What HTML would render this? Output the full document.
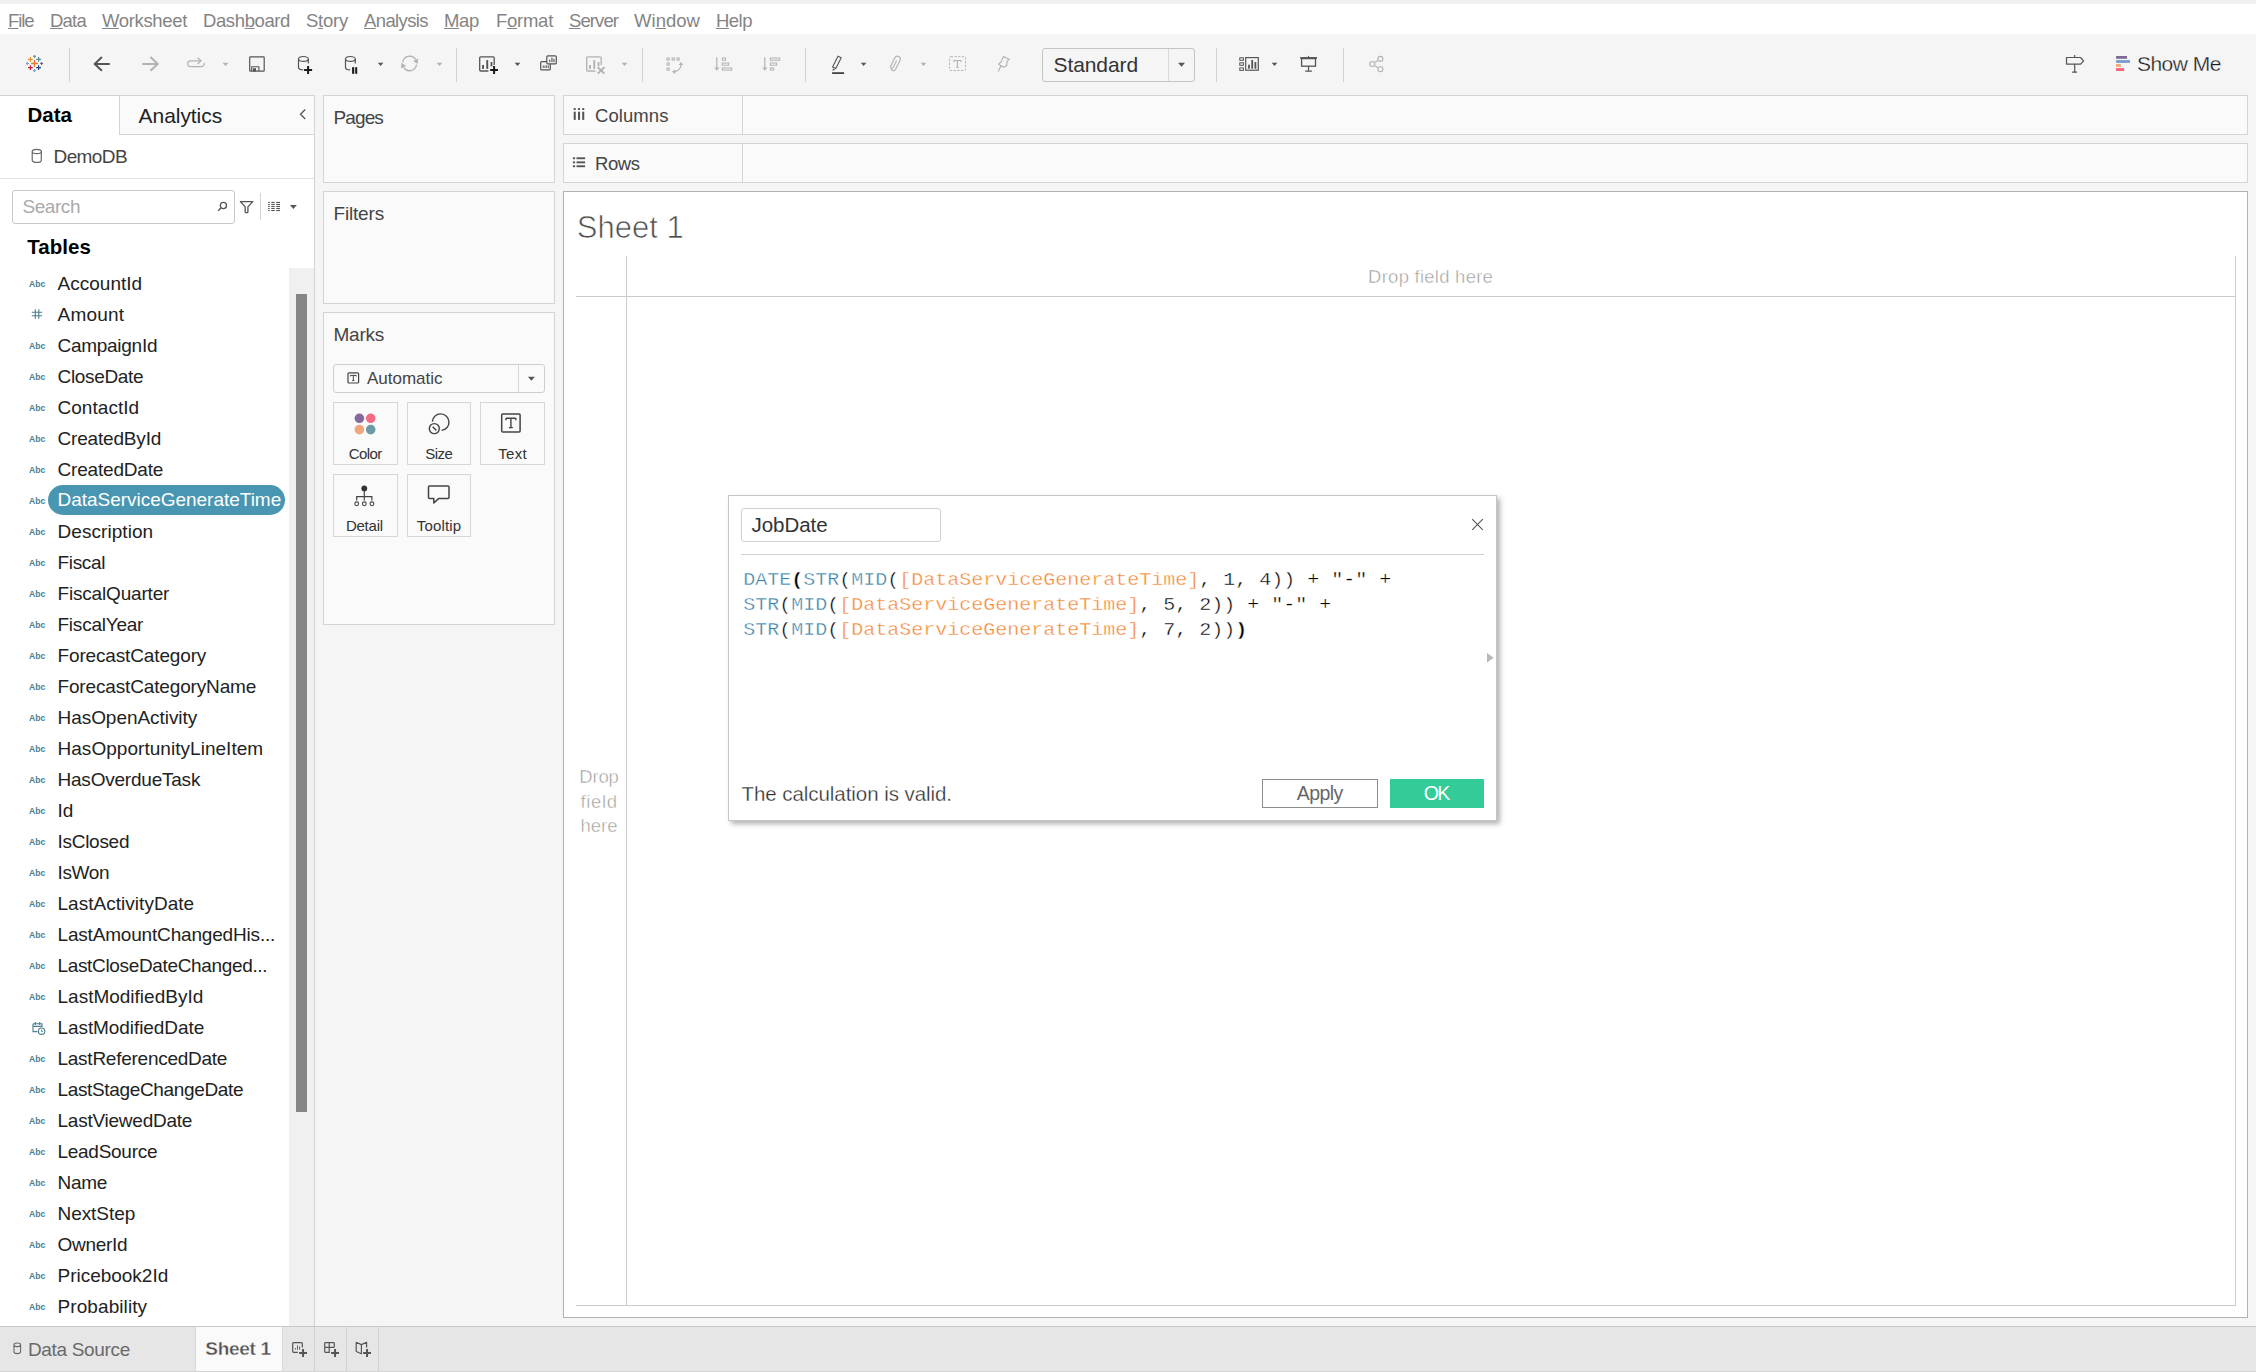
<!DOCTYPE html><html><head><meta charset="utf-8"><title>Tableau - Sheet 1</title><style>
html,body{margin:0;padding:0;}body{width:2256px;height:1372px;position:relative;overflow:hidden;background:#f5f5f5;font-family:"Liberation Sans", sans-serif;}
div,svg,span.t{position:absolute;}span.t{white-space:pre;line-height:1;}u{text-decoration-thickness:1px;text-underline-offset:1px;}
</style></head><body>
<div style="left:0px;top:0px;width:2256px;height:4px;background:#f0f0f0;"></div>
<div style="left:0px;top:4px;width:2256px;height:30px;background:#ffffff;"></div>
<div style="left:0px;top:34px;width:2256px;height:61px;background:#f5f5f5;"></div>
<div style="left:69px;top:48px;width:1px;height:34px;background:#d0d0d0;"></div>
<div style="left:456px;top:48px;width:1px;height:34px;background:#d0d0d0;"></div>
<div style="left:642px;top:48px;width:1px;height:34px;background:#d0d0d0;"></div>
<div style="left:805px;top:48px;width:1px;height:34px;background:#d0d0d0;"></div>
<div style="left:1216px;top:48px;width:1px;height:34px;background:#d0d0d0;"></div>
<div style="left:1343px;top:48px;width:1px;height:34px;background:#d0d0d0;"></div>
<div style="left:0px;top:95px;width:315px;height:1231px;background:#ffffff;border:1px solid #d2d2d2;box-sizing:border-box;border-left:none;border-bottom:none;"></div>
<div style="left:119px;top:95px;width:196px;height:40px;background:#fafafa;border:1px solid #d4d4d4;box-sizing:border-box;"></div>
<svg style="left:299px;top:108px;" width="8" height="13" viewBox="0 0 8 13"><path d="M6.2 1.5 L1.5 6.3 L6.2 11" fill="none" stroke="#555" stroke-width="1.3"/></svg>
<svg style="left:31px;top:148px;" width="12" height="16" viewBox="0 0 12 16"><path d="M1.2 3.5 C1.2 0.6 10.3 0.6 10.3 3.5 V12.2 C10.3 15.2 1.2 15.2 1.2 12.2 Z M1.2 3.5 C1.2 6.4 10.3 6.4 10.3 3.5" fill="none" stroke="#666" stroke-width="1.2"/></svg>
<div style="left:0px;top:178px;width:314px;height:1px;background:#e2e2e2;"></div>
<div style="left:12px;top:190px;width:223px;height:34px;background:#fff;border:1px solid #c8c8c8;box-sizing:border-box;border-radius:3px;"></div>
<div style="left:260px;top:193px;width:1px;height:27px;background:#d4d4d4;"></div>
<div style="left:289px;top:268px;width:25px;height:1058px;background:#f0f0f0;"></div>
<div style="left:296px;top:294px;width:11px;height:818px;background:#868686;"></div>
<svg style="left:31px;top:308px;" width="12" height="12" viewBox="0 0 12 12"><path d="M4.3 1.2 V10.8 M7.8 1.2 V10.8 M0.8 4.3 H11.2 M0.8 7.8 H11.2" stroke="#4a7e91" stroke-width="1.1" fill="none"/></svg>
<div style="left:48px;top:485px;width:237px;height:30px;background:#4996b2;border-radius:15px;"></div>
<svg style="left:30.7px;top:1020.9px;" width="16" height="15" viewBox="0 0 16 15"><path d="M2 2.8 H11 V6 M2 2.8 V10.6 H6.5 M2 5.4 H11 M4.3 1 V4 M8.7 1 V4" fill="none" stroke="#4a7e91" stroke-width="1.1"/><circle cx="10.6" cy="10.2" r="3.2" fill="none" stroke="#4a7e91" stroke-width="1.1"/><path d="M10.6 8.6 V10.4 H12" fill="none" stroke="#4a7e91" stroke-width="0.9"/></svg>
<div style="left:323px;top:95px;width:232px;height:88px;background:#fafafa;border:1px solid #d4d4d4;box-sizing:border-box;"></div>
<div style="left:323px;top:191px;width:232px;height:113px;background:#fafafa;border:1px solid #d4d4d4;box-sizing:border-box;"></div>
<div style="left:323px;top:312px;width:232px;height:313px;background:#fafafa;border:1px solid #d4d4d4;box-sizing:border-box;"></div>
<div style="left:563px;top:95px;width:1685px;height:40px;background:#fafafa;border:1px solid #d4d4d4;box-sizing:border-box;"></div>
<div style="left:742px;top:95px;width:1px;height:40px;background:#d4d4d4;"></div>
<div style="left:563px;top:143px;width:1685px;height:40px;background:#fafafa;border:1px solid #d4d4d4;box-sizing:border-box;"></div>
<div style="left:742px;top:143px;width:1px;height:40px;background:#d4d4d4;"></div>
<div style="left:563px;top:191px;width:1685px;height:1127px;background:#fff;border:1px solid #b2b2b2;box-sizing:border-box;"></div>
<div style="left:576px;top:296px;width:1660px;height:1px;background:#cbcbcb;"></div>
<div style="left:626px;top:256px;width:1px;height:1050px;background:#cbcbcb;"></div>
<div style="left:2235px;top:256px;width:1px;height:1050px;background:#cbcbcb;"></div>
<div style="left:576px;top:1305px;width:1660px;height:1px;background:#cbcbcb;"></div>
<div style="left:0px;top:1326px;width:2256px;height:46px;background:#e6e6e6;"></div>
<div style="left:0px;top:1326px;width:2256px;height:1px;background:#c8c8c8;"></div>
<div style="left:195px;top:1327px;width:88px;height:45px;background:#fafafa;border-left:1px solid #d8d8d8;border-right:1px solid #d8d8d8;box-sizing:border-box;"></div>
<div style="left:314px;top:1327px;width:1px;height:45px;background:#d2d2d2;"></div>
<div style="left:346px;top:1327px;width:1px;height:45px;background:#d2d2d2;"></div>
<div style="left:378px;top:1327px;width:1px;height:45px;background:#d2d2d2;"></div>
<div style="left:0px;top:1371px;width:2256px;height:1px;background:#d4d4d4;"></div>
<svg style="left:13px;top:1342px;" width="9" height="13" viewBox="0 0 9 13"><path d="M1 2.8 C1 0.4 7.6 0.4 7.6 2.8 V9.8 C7.6 12.2 1 12.2 1 9.8 Z M1 2.8 C1 5.2 7.6 5.2 7.6 2.8" fill="none" stroke="#666" stroke-width="1.1"/></svg>
<div style="left:333px;top:364px;width:212px;height:29px;background:#fafafa;border:1px solid #cfcfcf;box-sizing:border-box;border-radius:3px;"></div>
<div style="left:518px;top:365px;width:1px;height:27px;background:#d9d9d9;"></div>
<svg style="left:347px;top:372px;" width="13" height="12" viewBox="0 0 13 12"><rect x="1" y="0.8" width="10.6" height="10.2" rx="1" fill="none" stroke="#444" stroke-width="1.2"/><path d="M3.4 3.4 H9.2 M6.3 3.4 V8.6 M5.2 8.6 H7.4 M3.4 3.4 V4.4 M9.2 3.4 V4.4" stroke="#444" stroke-width="1" fill="none"/></svg>
<div style="left:333px;top:402px;width:65px;height:63px;background:#fafafa;border:1px solid #d6d6d6;box-sizing:border-box;"></div>
<div style="left:407px;top:402px;width:64px;height:63px;background:#fafafa;border:1px solid #d6d6d6;box-sizing:border-box;"></div>
<div style="left:480px;top:402px;width:65px;height:63px;background:#fafafa;border:1px solid #d6d6d6;box-sizing:border-box;"></div>
<div style="left:333px;top:474px;width:65px;height:63px;background:#fafafa;border:1px solid #d6d6d6;box-sizing:border-box;"></div>
<div style="left:407px;top:474px;width:64px;height:63px;background:#fafafa;border:1px solid #d6d6d6;box-sizing:border-box;"></div>
<svg style="left:352px;top:411px;" width="26" height="26" viewBox="0 0 26 26"><circle cx="7.4" cy="7.3" r="4.8" fill="#85699a"/><circle cx="18.7" cy="7.3" r="4.8" fill="#f26d81"/><circle cx="7.4" cy="18.6" r="4.8" fill="#f0a57c"/><circle cx="18.7" cy="18.6" r="4.8" fill="#6c9aa5"/></svg>
<svg style="left:426px;top:411px;" width="26" height="26" viewBox="0 0 26 26"><path d="M6.4 10.6 A8.3 8.3 0 1 1 15.6 19.4" fill="none" stroke="#444" stroke-width="1.4"/><circle cx="8.3" cy="17.6" r="5" fill="none" stroke="#444" stroke-width="1.4"/><path d="M6.6 15.7 L10.4 19.6" stroke="#444" stroke-width="1.4"/></svg>
<svg style="left:500px;top:412px;" width="22" height="22" viewBox="0 0 22 22"><rect x="1.7" y="1.9" width="18.4" height="18" rx="1" fill="none" stroke="#444" stroke-width="1.5"/><path d="M6 6.2 H15.8 M10.9 6.2 V15.4 M8.9 15.6 H12.9 M6 6 V8.3 M15.8 6 V8.3" stroke="#444" stroke-width="1.4" fill="none"/></svg>
<svg style="left:353px;top:484px;" width="24" height="24" viewBox="0 0 24 24"><circle cx="11.3" cy="4.4" r="2.9" fill="#333"/><path d="M11.3 7 V16.5 M3.7 16.5 V12.6 H18.9 V16.5" fill="none" stroke="#444" stroke-width="1.2"/><circle cx="3.7" cy="19.8" r="1.9" fill="none" stroke="#444" stroke-width="1.1"/><circle cx="11.3" cy="19.8" r="1.9" fill="none" stroke="#444" stroke-width="1.1"/><circle cx="18.9" cy="19.8" r="1.9" fill="none" stroke="#444" stroke-width="1.1"/></svg>
<svg style="left:427px;top:484px;" width="24" height="22" viewBox="0 0 24 22"><path d="M2.5 2 H21 Q22 2 22 3 V13.6 Q22 14.6 21 14.6 H11.6 L6.8 19 V14.6 H2.5 Q1.5 14.6 1.5 13.6 V3 Q1.5 2 2.5 2 Z" fill="none" stroke="#444" stroke-width="1.5" stroke-linejoin="round"/></svg>
<svg style="left:573px;top:108px;" width="13" height="13" viewBox="0 0 13 13"><rect x="0.7" y="3.7" width="2.05" height="8.2" fill="#555"/><rect x="0.7" y="0.1" width="2.05" height="1.9" fill="#555"/><rect x="5" y="3.7" width="2.05" height="8.2" fill="#555"/><rect x="5" y="0.1" width="2.05" height="1.9" fill="#555"/><rect x="9.2" y="3.7" width="2.05" height="8.2" fill="#555"/><rect x="9.2" y="0.1" width="2.05" height="1.9" fill="#555"/></svg>
<svg style="left:572px;top:156px;" width="14" height="12" viewBox="0 0 14 12"><rect x="0.9" y="1.3" width="2.2" height="1.9" fill="#555"/><rect x="4.5" y="1.3" width="8.6" height="1.9" fill="#555"/><rect x="0.9" y="5.4" width="2.2" height="1.9" fill="#555"/><rect x="4.5" y="5.4" width="8.6" height="1.9" fill="#555"/><rect x="0.9" y="9.3" width="2.2" height="1.9" fill="#555"/><rect x="4.5" y="9.3" width="8.6" height="1.9" fill="#555"/></svg>
<svg style="left:25px;top:54px;" width="20" height="20" viewBox="0 0 20 20"><path d="M6.1 9.5 H12.9 M9.5 6.1 V12.9" stroke="#e8762d" stroke-width="1.3" fill="none"/><path d="M3.0000000000000004 5.4 H7.800000000000001 M5.4 3.0000000000000004 V7.800000000000001" stroke="#eb912c" stroke-width="1.2" fill="none"/><path d="M11.2 5.4 H16.0 M13.6 3.0000000000000004 V7.800000000000001" stroke="#59879b" stroke-width="1.2" fill="none"/><path d="M3.0000000000000004 13.6 H7.800000000000001 M5.4 11.2 V16.0" stroke="#c72037" stroke-width="1.2" fill="none"/><path d="M11.2 13.6 H16.0 M13.6 11.2 V16.0" stroke="#1f457e" stroke-width="1.2" fill="none"/><path d="M8.0 2.4 H11.0 M9.5 0.8999999999999999 V3.9" stroke="#6e9aa8" stroke-width="1.1" fill="none"/><path d="M8.0 16.6 H11.0 M9.5 15.100000000000001 V18.1" stroke="#8d9cc6" stroke-width="1.1" fill="none"/><path d="M0.8999999999999999 9.5 H3.9 M2.4 8.0 V11.0" stroke="#7ea3b0" stroke-width="1.1" fill="none"/><path d="M15.100000000000001 9.5 H18.1 M16.6 8.0 V11.0" stroke="#5c6692" stroke-width="1.1" fill="none"/></svg>
<svg style="left:92px;top:55px;" width="20" height="18" viewBox="0 0 20 18"><path d="M17.8 8.9 H3.2 M9.9 2.1 L2.7 8.9 L9.9 15.8" fill="none" stroke="#555555" stroke-width="2"/></svg>
<svg style="left:140px;top:55px;" width="20" height="18" viewBox="0 0 20 18"><path d="M2.3 8.9 H17 M10.5 2.1 L17.7 8.9 L10.5 15.8" fill="none" stroke="#b2b2b2" stroke-width="2"/></svg>
<svg style="left:186px;top:55px;" width="20" height="14" viewBox="0 0 20 14"><path d="M14 5.8 H4.6 A2.9 2.9 0 0 0 4.6 11.6 H15.4 A2.9 2.9 0 0 0 18.2 7.9" fill="none" stroke="#b2b2b2" stroke-width="1.2"/><path d="M11.6 2.7 L15 5.8 L11.6 8.9" fill="none" stroke="#b2b2b2" stroke-width="1.3"/></svg>
<svg style="left:220px;top:60px;" width="10" height="8" viewBox="0 0 10 8"><path d="M2.70 2.75 h5.6 l-2.8 3.3 Z" fill="#b2b2b2"/></svg>
<svg style="left:248px;top:55px;" width="18" height="18" viewBox="0 0 18 18"><rect x="1.7" y="1.8" width="14.5" height="14.4" rx="0.8" fill="none" stroke="#555555" stroke-width="1.2"/><path d="M3.7 16 V11.8 H10.9 V16" fill="none" stroke="#555555" stroke-width="1.1"/><rect x="5" y="13.2" width="3" height="3.2" fill="#555555"/></svg>
<svg style="left:296px;top:54px;" width="20" height="22" viewBox="0 0 20 22"><ellipse cx="7.4" cy="4.9" rx="4.9" ry="2.4" fill="none" stroke="#555555" stroke-width="1.2"/><path d="M2.5 4.9 V13.2 C2.5 15 5 15.9 7.2 15.9 M12.3 4.9 V9.6" fill="none" stroke="#555555" stroke-width="1.2"/><path d="M8.1 16 H16.1 M12.1 12 V20" stroke="#1a1a1a" stroke-width="2" fill="none"/></svg>
<svg style="left:343px;top:54px;" width="20" height="22" viewBox="0 0 20 22"><ellipse cx="7.4" cy="4.9" rx="4.9" ry="2.4" fill="none" stroke="#555555" stroke-width="1.2"/><path d="M2.5 4.9 V13.2 C2.5 15 5 15.9 7.2 15.9 M12.3 4.9 V9.6" fill="none" stroke="#555555" stroke-width="1.2"/><rect x="9.1" y="13.2" width="2.1" height="6.6" fill="#1a1a1a"/><rect x="12.2" y="13.2" width="2" height="6.6" fill="#1a1a1a"/></svg>
<svg style="left:375px;top:60px;" width="10" height="8" viewBox="0 0 10 8"><path d="M2.80 2.75 h5.6 l-2.8 3.3 Z" fill="#555555"/></svg>
<svg style="left:400px;top:54px;" width="20" height="20" viewBox="0 0 20 20"><path d="M2.7 8.3 A7 7 0 0 1 15.6 5.4 M16.5 10.5 A7 7 0 0 1 3.6 13.4" fill="none" stroke="#b2b2b2" stroke-width="1.3"/><path d="M13.2 6.9 L18.3 4.6 L17.6 10 Z M6 11.9 L0.9 14.2 L1.6 8.8 Z" fill="#b2b2b2"/></svg>
<svg style="left:434px;top:60px;" width="10" height="8" viewBox="0 0 10 8"><path d="M2.70 2.75 h5.6 l-2.8 3.3 Z" fill="#b2b2b2"/></svg>
<svg style="left:478px;top:55px;" width="22" height="20" viewBox="0 0 22 20"><path d="M16.2 10 V2.8 Q16.2 1.8 15.2 1.8 H2.7 Q1.7 1.8 1.7 2.8 V15 Q1.7 16 2.7 16 H10.4" fill="none" stroke="#555555" stroke-width="1.3"/><rect x="4.1" y="10" width="1.9" height="3.9" fill="#555555"/><rect x="8.3" y="5.1" width="1.9" height="8.8" fill="#555555"/><rect x="12.6" y="7" width="1.8" height="4.4" fill="#555555"/><path d="M12.2 15 H20 M16.1 11.1 V18.9" stroke="#1a1a1a" stroke-width="2" fill="none"/></svg>
<svg style="left:512px;top:60px;" width="10" height="8" viewBox="0 0 10 8"><path d="M2.70 2.75 h5.6 l-2.8 3.3 Z" fill="#555555"/></svg>
<svg style="left:539px;top:54px;" width="20" height="19" viewBox="0 0 20 19"><path d="M7.8 7.7 H2.7 Q1.7 7.7 1.7 8.7 V14.9 Q1.7 15.9 2.7 15.9 H10.3 Q11.3 15.9 11.3 14.9 V9.9" fill="none" stroke="#555555" stroke-width="1.2"/><path d="M4.3 11.4 V14 M6 11.4 V14 M7.7 11.4 V14 M9.4 11.4 V14" stroke="#555555" stroke-width="0.9"/><rect x="7.8" y="1.8" width="9.5" height="8.1" rx="1" fill="none" stroke="#555555" stroke-width="1.2"/><rect x="10.2" y="5.6" width="1.1" height="2.6" fill="#555555"/><rect x="12.4" y="3.6" width="1.1" height="4.6" fill="#555555"/><rect x="14.4" y="4.8" width="1.1" height="3.4" fill="#555555"/></svg>
<svg style="left:585px;top:55px;" width="22" height="20" viewBox="0 0 22 20"><path d="M16.2 10 V2.8 Q16.2 1.8 15.2 1.8 H2.7 Q1.7 1.8 1.7 2.8 V15 Q1.7 16 2.7 16 H10.4" fill="none" stroke="#b2b2b2" stroke-width="1.3"/><rect x="4.1" y="10" width="1.9" height="3.9" fill="#b2b2b2"/><rect x="8.3" y="5.1" width="1.9" height="8.8" fill="#b2b2b2"/><rect x="12.6" y="7" width="1.8" height="4.4" fill="#b2b2b2"/><path d="M12.8 12.2 L19.4 18.6 M19.4 12.2 L12.8 18.6" stroke="#b2b2b2" stroke-width="1.9" fill="none"/></svg>
<svg style="left:619px;top:60px;" width="10" height="8" viewBox="0 0 10 8"><path d="M2.70 2.75 h5.6 l-2.8 3.3 Z" fill="#b2b2b2"/></svg>
<svg style="left:665px;top:56px;" width="18" height="18" viewBox="0 0 18 18"><rect x="2" y="2" width="2.2" height="2.1" fill="none" stroke="#b2b2b2" stroke-width="1"/><rect x="7.1" y="2" width="2.2" height="2.1" fill="none" stroke="#b2b2b2" stroke-width="1"/><rect x="12" y="2" width="2.2" height="2.1" fill="none" stroke="#b2b2b2" stroke-width="1"/><rect x="2" y="7" width="2.2" height="2.1" fill="none" stroke="#b2b2b2" stroke-width="1"/><rect x="2" y="12" width="2.2" height="2.1" fill="none" stroke="#b2b2b2" stroke-width="1"/><path d="M16 7.4 C16.4 12.4 13.2 15.4 8.6 15.6" fill="none" stroke="#b2b2b2" stroke-width="1.2"/><path d="M13.7 9 L16 5.9 L18.3 9 Z M10.3 13.4 L7.1 15.7 L10.3 17.9 Z" fill="#b2b2b2"/></svg>
<svg style="left:712.5px;top:56px;" width="20" height="17" viewBox="0 0 20 17"><path d="M3.8 1.2 V13" stroke="#b2b2b2" stroke-width="1.2"/><path d="M1.3 11.4 L3.8 14.8 L6.3 11.4 Z" fill="#b2b2b2"/><rect x="9.3" y="2" width="3.2" height="2.2" fill="none" stroke="#b2b2b2" stroke-width="1"/><rect x="9.3" y="7" width="6.4" height="2.2" fill="none" stroke="#b2b2b2" stroke-width="1"/><rect x="9.3" y="12" width="9.4" height="2.1" fill="none" stroke="#b2b2b2" stroke-width="1"/></svg>
<svg style="left:760.7px;top:56px;" width="20" height="17" viewBox="0 0 20 17"><path d="M3.8 1.2 V13" stroke="#b2b2b2" stroke-width="1.2"/><path d="M1.3 11.4 L3.8 14.8 L6.3 11.4 Z" fill="#b2b2b2"/><rect x="9.3" y="2" width="9.4" height="2.2" fill="none" stroke="#b2b2b2" stroke-width="1"/><rect x="9.3" y="7" width="6.4" height="2.2" fill="none" stroke="#b2b2b2" stroke-width="1"/><rect x="9.3" y="12" width="3.4" height="2.1" fill="none" stroke="#b2b2b2" stroke-width="1"/></svg>
<svg style="left:830px;top:54px;" width="18" height="22" viewBox="0 0 18 22"><path d="M8 2.2 L11.2 3.8 L5.8 14.6 L2.6 13 Z" fill="none" stroke="#555555" stroke-width="1.1"/><path d="M2.9 14.4 L2.6 16.9 L5.2 15.5 Z" fill="#555555"/><rect x="2.1" y="18.2" width="12" height="1.8" fill="#444"/></svg>
<svg style="left:858px;top:60px;" width="10" height="8" viewBox="0 0 10 8"><path d="M2.80 2.75 h5.6 l-2.8 3.3 Z" fill="#555555"/></svg>
<svg style="left:886px;top:54px;" width="18" height="20" viewBox="0 0 18 20"><path d="M-0.1 -3.4 V4.4 A1.4 1.4 0 0 1 -2.9 4.4 V-5 A2.9 2.9 0 0 1 2.9 -5 V5.2 A2.1 2.1 0 0 1 -1.3 5.2" fill="none" stroke="#b2b2b2" stroke-width="1.1" transform="translate(9.2 9.6) rotate(27)"/></svg>
<svg style="left:918px;top:60px;" width="10" height="8" viewBox="0 0 10 8"><path d="M2.70 2.75 h5.6 l-2.8 3.3 Z" fill="#b2b2b2"/></svg>
<svg style="left:948px;top:55px;" width="18" height="18" viewBox="0 0 18 18"><rect x="1.6" y="1.7" width="16" height="13.8" rx="1.2" fill="none" stroke="#b2b2b2" stroke-width="1" stroke-dasharray="2.2 1.5"/><path d="M5.9 5.5 H12.9 M9.4 5.5 V12.2 M8 12.3 H10.8 M5.9 5.3 V6.9 M12.9 5.3 V6.9" stroke="#b2b2b2" stroke-width="1.1" fill="none"/></svg>
<svg style="left:994px;top:55px;" width="18" height="18" viewBox="0 0 18 18"><path d="M9.4 1.4 L15.4 4.4 L13.2 6 L12.6 10.6 L9.6 12.2 L4.6 9.2 L7 7 L8.8 3 Z M7 10.7 L4.2 16.4" fill="none" stroke="#b2b2b2" stroke-width="1.1" stroke-linejoin="round"/></svg>
<div style="left:1042px;top:48px;width:153px;height:34px;background:#f5f5f5;border:1px solid #c4c4c4;box-sizing:border-box;border-radius:3px;"></div>
<div style="left:1168px;top:49px;width:1px;height:32px;background:#d9d9d9;"></div>
<svg style="left:1176px;top:60px;" width="10" height="8" viewBox="0 0 10 8"><path d="M2.00 2.80 h7.0 l-3.5 4.0 Z" fill="#555"/></svg>
<svg style="left:1238px;top:55px;" width="22" height="18" viewBox="0 0 22 18"><rect x="1.8" y="2.8" width="3.6" height="2.5" fill="none" stroke="#555555" stroke-width="1"/><rect x="1.8" y="7.8" width="3.6" height="2.5" fill="none" stroke="#555555" stroke-width="1"/><rect x="1.8" y="12.9" width="3.6" height="2.5" fill="none" stroke="#555555" stroke-width="1"/><rect x="7.7" y="2.6" width="12.6" height="12.6" fill="none" stroke="#555555" stroke-width="1.2"/><rect x="10.1" y="9.7" width="1.8" height="4" fill="#555555"/><rect x="13.3" y="5" width="1.8" height="8.7" fill="#555555"/><rect x="16.5" y="7.1" width="1.8" height="6.6" fill="#555555"/></svg>
<svg style="left:1269px;top:60px;" width="10" height="8" viewBox="0 0 10 8"><path d="M2.70 2.75 h5.6 l-2.8 3.3 Z" fill="#555555"/></svg>
<svg style="left:1299px;top:55px;" width="20" height="18" viewBox="0 0 20 18"><path d="M1.2 3 H17.9" stroke="#555555" stroke-width="1.9"/><path d="M9.5 0.9 V2.2" stroke="#555555" stroke-width="1.1"/><rect x="2.6" y="3.6" width="13.9" height="7.6" fill="none" stroke="#555555" stroke-width="1.3"/><path d="M9.5 11.2 V15.8 M6.2 16.2 H12.9" stroke="#555555" stroke-width="1.2"/></svg>
<svg style="left:1367.7px;top:55px;" width="17" height="18" viewBox="0 0 17 18"><circle cx="12.4" cy="3.9" r="2.5" fill="none" stroke="#b2b2b2" stroke-width="1.1"/><circle cx="4.2" cy="9" r="2.5" fill="none" stroke="#b2b2b2" stroke-width="1.1"/><circle cx="12.4" cy="14.2" r="2.5" fill="none" stroke="#b2b2b2" stroke-width="1.1"/><path d="M6.3 7.7 L10.2 5.2 M6.3 10.3 L10.2 12.9" stroke="#b2b2b2" stroke-width="1.1"/></svg>
<svg style="left:2064px;top:54px;" width="22" height="20" viewBox="0 0 22 20"><path d="M2.5 3.5 H16.6 L19.6 6.8 L16.6 10.1 H2.5 Z" fill="none" stroke="#555555" stroke-width="1.2" stroke-linejoin="round"/><path d="M10.7 1 V3.5 M10.7 10.1 V18 M8.1 18.2 H13" stroke="#555555" stroke-width="1.2"/></svg>
<svg style="left:2115px;top:55px;" width="16" height="17" viewBox="0 0 16 17"><rect x="1.1" y="1" width="10.9" height="2.8" fill="#806b95"/><rect x="1.1" y="5.1" width="13.9" height="2.8" fill="#7a9ccb"/><rect x="1.1" y="9.1" width="4.8" height="2.7" fill="#f0a470"/><rect x="1.1" y="13.1" width="8" height="2.9" fill="#f4627a"/></svg>
<svg style="left:291px;top:1341px;" width="18" height="18" viewBox="0 0 18 18"><path d="M11.3 6.5 V2.7 Q11.3 1.7 10.3 1.7 H2.7 Q1.7 1.7 1.7 2.7 V10.3 Q1.7 11.3 2.7 11.3 H6.8" fill="none" stroke="#555" stroke-width="1.2"/><rect x="4.1" y="7.1" width="0.9" height="1.5" fill="#555"/><rect x="6.1" y="4.4" width="0.9" height="4.3" fill="#555"/><rect x="8.2" y="5.5" width="0.9" height="3.2" fill="#555"/><path d="M8.1 12 H16 M12.05 8.1 V15.9" stroke="#555" stroke-width="2" fill="none"/></svg>
<svg style="left:323px;top:1341px;" width="18" height="18" viewBox="0 0 18 18"><path d="M11.3 6.3 V2.5 Q11.3 1.7 10.5 1.7 H2.5 Q1.7 1.7 1.7 2.5 V10.5 Q1.7 11.3 2.5 11.3 H6.8 M6.2 1.7 V11.3 M1.7 6.3 H11.3" fill="none" stroke="#555" stroke-width="1.2"/><path d="M8.1 12 H16 M12.05 8.1 V15.9" stroke="#555" stroke-width="2" fill="none"/></svg>
<svg style="left:355px;top:1341px;" width="18" height="18" viewBox="0 0 18 18"><path d="M1.2 1.2 L6.4 3.6 L11.6 1.2 V6.4 M1.2 1.2 V10.5 L6.4 12.7 V3.6" fill="none" stroke="#555" stroke-width="1.2" stroke-linejoin="round"/><path d="M8.1 12 H16 M12.05 8.1 V15.9" stroke="#555" stroke-width="2" fill="none"/></svg>
<svg style="left:526px;top:374px;" width="10" height="8" viewBox="0 0 10 8"><path d="M1.90 2.80 h7.0 l-3.5 4.0 Z" fill="#555"/></svg>
<svg style="left:216px;top:200px;" width="13" height="13" viewBox="0 0 13 13"><circle cx="7.4" cy="5.5" r="3.1" fill="none" stroke="#555" stroke-width="1.3"/><path d="M5.2 7.7 L2.2 10.7" stroke="#555" stroke-width="1.4"/></svg>
<svg style="left:239px;top:200px;" width="16" height="14" viewBox="0 0 16 14"><path d="M1.4 1.6 H13.8 L8.9 6.9 V12 Q8.9 12.6 8.3 12.6 H6.8 Q6.2 12.6 6.2 12 V6.9 Z" fill="none" stroke="#555" stroke-width="1.3" stroke-linejoin="round"/></svg>
<svg style="left:267px;top:201px;" width="14" height="12" viewBox="0 0 14 12"><rect x="1.1" y="0.90" width="1.6" height="1.1" fill="#555"/><rect x="4.3" y="0.90" width="3.4" height="1.1" fill="#555"/><rect x="9.2" y="0.90" width="3.8" height="1.1" fill="#555"/><rect x="1.1" y="2.92" width="1.6" height="1.1" fill="#555"/><rect x="4.3" y="2.92" width="3.4" height="1.1" fill="#555"/><rect x="9.2" y="2.92" width="3.8" height="1.1" fill="#555"/><rect x="1.1" y="4.94" width="1.6" height="1.1" fill="#555"/><rect x="4.3" y="4.94" width="3.4" height="1.1" fill="#555"/><rect x="9.2" y="4.94" width="3.8" height="1.1" fill="#555"/><rect x="1.1" y="6.96" width="1.6" height="1.1" fill="#555"/><rect x="4.3" y="6.96" width="3.4" height="1.1" fill="#555"/><rect x="9.2" y="6.96" width="3.8" height="1.1" fill="#555"/><rect x="1.1" y="8.98" width="1.6" height="1.1" fill="#555"/><rect x="4.3" y="8.98" width="3.4" height="1.1" fill="#555"/><rect x="9.2" y="8.98" width="3.8" height="1.1" fill="#555"/></svg>
<svg style="left:288px;top:202px;" width="10" height="8" viewBox="0 0 10 8"><path d="M1.90 2.90 h7.0 l-3.5 4.0 Z" fill="#555"/></svg>
<div style="left:728px;top:495px;width:769px;height:326px;background:#fff;border:1px solid #c6c6c6;box-sizing:border-box;box-shadow:3px 3px 5px rgba(0,0,0,0.30);"></div>
<div style="left:741px;top:508px;width:200px;height:34px;background:#fff;border:1px solid #cfcfcf;box-sizing:border-box;border-radius:3px;"></div>
<svg style="left:1471px;top:518px;" width="13" height="13" viewBox="0 0 13 13"><path d="M1.2 1.2 L11.8 11.8 M11.8 1.2 L1.2 11.8" stroke="#555" stroke-width="1.1" fill="none"/></svg>
<div style="left:741px;top:554px;width:743px;height:1px;background:#cfcfcf;"></div>
<svg style="left:1486px;top:652px;" width="9" height="12" viewBox="0 0 9 12"><path d="M1 1 L7.6 5.8 L1 10.6 Z" fill="#b8b8b8"/></svg>
<div style="left:1262px;top:779px;width:116px;height:29px;background:#fff;border:1px solid #8c8c8c;box-sizing:border-box;"></div>
<div style="left:1390px;top:779px;width:94px;height:29px;background:#33cc99;"></div>
<span class="t" style="top:12.34px;font-size:18.5px;color:#848484;letter-spacing:-1.107px;left:8px;"><u>F</u>ile</span>
<span class="t" style="top:12.34px;font-size:18.5px;color:#848484;letter-spacing:-0.773px;left:50px;"><u>D</u>ata</span>
<span class="t" style="top:12.34px;font-size:18.5px;color:#848484;letter-spacing:-0.345px;left:102px;"><u>W</u>orksheet</span>
<span class="t" style="top:12.34px;font-size:18.5px;color:#848484;letter-spacing:-0.392px;left:203px;">Dash<u>b</u>oard</span>
<span class="t" style="top:12.34px;font-size:18.5px;color:#848484;letter-spacing:-0.237px;left:306px;">S<u>t</u>ory</span>
<span class="t" style="top:12.34px;font-size:18.5px;color:#848484;letter-spacing:-0.613px;left:364px;"><u>A</u>nalysis</span>
<span class="t" style="top:12.34px;font-size:18.5px;color:#848484;letter-spacing:-0.333px;left:444px;"><u>M</u>ap</span>
<span class="t" style="top:12.34px;font-size:18.5px;color:#848484;letter-spacing:-0.268px;left:496px;">F<u>o</u>rmat</span>
<span class="t" style="top:12.34px;font-size:18.5px;color:#848484;letter-spacing:-0.917px;left:569px;"><u>S</u>erver</span>
<span class="t" style="top:12.34px;font-size:18.5px;color:#848484;letter-spacing:0.029px;left:634px;">Wi<u>n</u>dow</span>
<span class="t" style="top:12.34px;font-size:18.5px;color:#848484;letter-spacing:-0.520px;left:716px;"><u>H</u>elp</span>
<span class="t" style="top:104.94px;font-size:20.5px;color:#000;font-weight:700;letter-spacing:0.016px;left:27.5px;">Data</span>
<span class="t" style="top:104.52px;font-size:21px;color:#222;letter-spacing:-0.059px;left:138.6px;">Analytics</span>
<span class="t" style="top:147.11px;font-size:19px;color:#444;letter-spacing:-0.596px;left:53.5px;">DemoDB</span>
<span class="t" style="top:197.11px;font-size:19px;color:#aaa;letter-spacing:-0.451px;left:22.5px;">Search</span>
<span class="t" style="top:237.44px;font-size:20.5px;color:#000;font-weight:700;letter-spacing:0.013px;left:27.3px;">Tables</span>
<span class="t" style="top:273.71px;font-size:19px;color:#222;letter-spacing:0.022px;left:57.5px;">AccountId</span>
<span class="t" style="top:278.64px;font-size:9.4px;color:#4a7e91;font-weight:700;left:28.8px;transform:scaleX(0.92);transform-origin:0 0;">Abc</span>
<span class="t" style="top:304.71px;font-size:19px;color:#222;letter-spacing:0.203px;left:57.5px;">Amount</span>
<span class="t" style="top:335.71px;font-size:19px;color:#222;letter-spacing:-0.275px;left:57.5px;">CampaignId</span>
<span class="t" style="top:340.64px;font-size:9.4px;color:#4a7e91;font-weight:700;left:28.8px;transform:scaleX(0.92);transform-origin:0 0;">Abc</span>
<span class="t" style="top:366.71px;font-size:19px;color:#222;letter-spacing:-0.335px;left:57.5px;">CloseDate</span>
<span class="t" style="top:371.64px;font-size:9.4px;color:#4a7e91;font-weight:700;left:28.8px;transform:scaleX(0.92);transform-origin:0 0;">Abc</span>
<span class="t" style="top:397.71px;font-size:19px;color:#222;letter-spacing:0.041px;left:57.5px;">ContactId</span>
<span class="t" style="top:402.64px;font-size:9.4px;color:#4a7e91;font-weight:700;left:28.8px;transform:scaleX(0.92);transform-origin:0 0;">Abc</span>
<span class="t" style="top:428.71px;font-size:19px;color:#222;letter-spacing:-0.175px;left:57.5px;">CreatedById</span>
<span class="t" style="top:433.64px;font-size:9.4px;color:#4a7e91;font-weight:700;left:28.8px;transform:scaleX(0.92);transform-origin:0 0;">Abc</span>
<span class="t" style="top:459.71px;font-size:19px;color:#222;letter-spacing:-0.185px;left:57.5px;">CreatedDate</span>
<span class="t" style="top:464.64px;font-size:9.4px;color:#4a7e91;font-weight:700;left:28.8px;transform:scaleX(0.92);transform-origin:0 0;">Abc</span>
<span class="t" style="top:490.01px;font-size:19px;color:#fff;letter-spacing:-0.023px;left:57.5px;">DataServiceGenerateTime</span>
<span class="t" style="top:495.64px;font-size:9.4px;color:#4a7e91;font-weight:700;left:28.8px;transform:scaleX(0.92);transform-origin:0 0;">Abc</span>
<span class="t" style="top:521.71px;font-size:19px;color:#222;letter-spacing:0.059px;left:57.5px;">Description</span>
<span class="t" style="top:526.64px;font-size:9.4px;color:#4a7e91;font-weight:700;left:28.8px;transform:scaleX(0.92);transform-origin:0 0;">Abc</span>
<span class="t" style="top:552.71px;font-size:19px;color:#222;letter-spacing:-0.321px;left:57.5px;">Fiscal</span>
<span class="t" style="top:557.64px;font-size:9.4px;color:#4a7e91;font-weight:700;left:28.8px;transform:scaleX(0.92);transform-origin:0 0;">Abc</span>
<span class="t" style="top:583.71px;font-size:19px;color:#222;letter-spacing:-0.179px;left:57.5px;">FiscalQuarter</span>
<span class="t" style="top:588.64px;font-size:9.4px;color:#4a7e91;font-weight:700;left:28.8px;transform:scaleX(0.92);transform-origin:0 0;">Abc</span>
<span class="t" style="top:614.71px;font-size:19px;color:#222;letter-spacing:-0.232px;left:57.5px;">FiscalYear</span>
<span class="t" style="top:619.64px;font-size:9.4px;color:#4a7e91;font-weight:700;left:28.8px;transform:scaleX(0.92);transform-origin:0 0;">Abc</span>
<span class="t" style="top:645.71px;font-size:19px;color:#222;letter-spacing:-0.145px;left:57.5px;">ForecastCategory</span>
<span class="t" style="top:650.64px;font-size:9.4px;color:#4a7e91;font-weight:700;left:28.8px;transform:scaleX(0.92);transform-origin:0 0;">Abc</span>
<span class="t" style="top:676.71px;font-size:19px;color:#222;letter-spacing:-0.150px;left:57.5px;">ForecastCategoryName</span>
<span class="t" style="top:681.64px;font-size:9.4px;color:#4a7e91;font-weight:700;left:28.8px;transform:scaleX(0.92);transform-origin:0 0;">Abc</span>
<span class="t" style="top:707.71px;font-size:19px;color:#222;letter-spacing:-0.050px;left:57.5px;">HasOpenActivity</span>
<span class="t" style="top:712.64px;font-size:9.4px;color:#4a7e91;font-weight:700;left:28.8px;transform:scaleX(0.92);transform-origin:0 0;">Abc</span>
<span class="t" style="top:738.71px;font-size:19px;color:#222;letter-spacing:0.037px;left:57.5px;">HasOpportunityLineItem</span>
<span class="t" style="top:743.64px;font-size:9.4px;color:#4a7e91;font-weight:700;left:28.8px;transform:scaleX(0.92);transform-origin:0 0;">Abc</span>
<span class="t" style="top:769.71px;font-size:19px;color:#222;letter-spacing:-0.217px;left:57.5px;">HasOverdueTask</span>
<span class="t" style="top:774.64px;font-size:9.4px;color:#4a7e91;font-weight:700;left:28.8px;transform:scaleX(0.92);transform-origin:0 0;">Abc</span>
<span class="t" style="top:800.71px;font-size:19px;color:#222;letter-spacing:-0.080px;left:57.5px;">Id</span>
<span class="t" style="top:805.64px;font-size:9.4px;color:#4a7e91;font-weight:700;left:28.8px;transform:scaleX(0.92);transform-origin:0 0;">Abc</span>
<span class="t" style="top:831.71px;font-size:19px;color:#222;letter-spacing:-0.278px;left:57.5px;">IsClosed</span>
<span class="t" style="top:836.64px;font-size:9.4px;color:#4a7e91;font-weight:700;left:28.8px;transform:scaleX(0.92);transform-origin:0 0;">Abc</span>
<span class="t" style="top:862.71px;font-size:19px;color:#222;letter-spacing:-0.363px;left:57.5px;">IsWon</span>
<span class="t" style="top:867.64px;font-size:9.4px;color:#4a7e91;font-weight:700;left:28.8px;transform:scaleX(0.92);transform-origin:0 0;">Abc</span>
<span class="t" style="top:893.71px;font-size:19px;color:#222;letter-spacing:0.029px;left:57.5px;">LastActivityDate</span>
<span class="t" style="top:898.64px;font-size:9.4px;color:#4a7e91;font-weight:700;left:28.8px;transform:scaleX(0.92);transform-origin:0 0;">Abc</span>
<span class="t" style="top:924.71px;font-size:19px;color:#222;letter-spacing:-0.178px;left:57.5px;">LastAmountChangedHis...</span>
<span class="t" style="top:929.64px;font-size:9.4px;color:#4a7e91;font-weight:700;left:28.8px;transform:scaleX(0.92);transform-origin:0 0;">Abc</span>
<span class="t" style="top:955.71px;font-size:19px;color:#222;letter-spacing:-0.343px;left:57.5px;">LastCloseDateChanged...</span>
<span class="t" style="top:960.64px;font-size:9.4px;color:#4a7e91;font-weight:700;left:28.8px;transform:scaleX(0.92);transform-origin:0 0;">Abc</span>
<span class="t" style="top:986.71px;font-size:19px;color:#222;left:57.5px;">LastModifiedById</span>
<span class="t" style="top:991.64px;font-size:9.4px;color:#4a7e91;font-weight:700;left:28.8px;transform:scaleX(0.92);transform-origin:0 0;">Abc</span>
<span class="t" style="top:1017.71px;font-size:19px;color:#222;letter-spacing:-0.073px;left:57.5px;">LastModifiedDate</span>
<span class="t" style="top:1048.71px;font-size:19px;color:#222;letter-spacing:-0.255px;left:57.5px;">LastReferencedDate</span>
<span class="t" style="top:1053.64px;font-size:9.4px;color:#4a7e91;font-weight:700;left:28.8px;transform:scaleX(0.92);transform-origin:0 0;">Abc</span>
<span class="t" style="top:1079.71px;font-size:19px;color:#222;letter-spacing:-0.346px;left:57.5px;">LastStageChangeDate</span>
<span class="t" style="top:1084.64px;font-size:9.4px;color:#4a7e91;font-weight:700;left:28.8px;transform:scaleX(0.92);transform-origin:0 0;">Abc</span>
<span class="t" style="top:1110.71px;font-size:19px;color:#222;letter-spacing:-0.238px;left:57.5px;">LastViewedDate</span>
<span class="t" style="top:1115.64px;font-size:9.4px;color:#4a7e91;font-weight:700;left:28.8px;transform:scaleX(0.92);transform-origin:0 0;">Abc</span>
<span class="t" style="top:1141.71px;font-size:19px;color:#222;letter-spacing:-0.277px;left:57.5px;">LeadSource</span>
<span class="t" style="top:1146.64px;font-size:9.4px;color:#4a7e91;font-weight:700;left:28.8px;transform:scaleX(0.92);transform-origin:0 0;">Abc</span>
<span class="t" style="top:1172.71px;font-size:19px;color:#222;letter-spacing:-0.247px;left:57.5px;">Name</span>
<span class="t" style="top:1177.64px;font-size:9.4px;color:#4a7e91;font-weight:700;left:28.8px;transform:scaleX(0.92);transform-origin:0 0;">Abc</span>
<span class="t" style="top:1203.71px;font-size:19px;color:#222;letter-spacing:-0.057px;left:57.5px;">NextStep</span>
<span class="t" style="top:1208.64px;font-size:9.4px;color:#4a7e91;font-weight:700;left:28.8px;transform:scaleX(0.92);transform-origin:0 0;">Abc</span>
<span class="t" style="top:1234.71px;font-size:19px;color:#222;letter-spacing:-0.302px;left:57.5px;">OwnerId</span>
<span class="t" style="top:1239.64px;font-size:9.4px;color:#4a7e91;font-weight:700;left:28.8px;transform:scaleX(0.92);transform-origin:0 0;">Abc</span>
<span class="t" style="top:1265.71px;font-size:19px;color:#222;letter-spacing:-0.017px;left:57.5px;">Pricebook2Id</span>
<span class="t" style="top:1270.64px;font-size:9.4px;color:#4a7e91;font-weight:700;left:28.8px;transform:scaleX(0.92);transform-origin:0 0;">Abc</span>
<span class="t" style="top:1296.71px;font-size:19px;color:#222;letter-spacing:0.089px;left:57.5px;">Probability</span>
<span class="t" style="top:1301.64px;font-size:9.4px;color:#4a7e91;font-weight:700;left:28.8px;transform:scaleX(0.92);transform-origin:0 0;">Abc</span>
<span class="t" style="top:108.21px;font-size:19px;color:#444;letter-spacing:-0.875px;left:333.5px;">Pages</span>
<span class="t" style="top:204.21px;font-size:19px;color:#444;letter-spacing:-0.176px;left:333.5px;">Filters</span>
<span class="t" style="top:325.01px;font-size:19px;color:#444;letter-spacing:-0.247px;left:333.5px;">Marks</span>
<span class="t" style="top:106.84px;font-size:18.5px;color:#444;letter-spacing:0.071px;left:595px;">Columns</span>
<span class="t" style="top:154.84px;font-size:18.5px;color:#444;letter-spacing:-0.441px;left:595px;">Rows</span>
<span class="t" style="top:211.75px;font-size:31px;color:#4c4c4c;letter-spacing:0.018px;left:576.7px;-webkit-text-stroke:0.7px #fff;">Sheet 1</span>
<span class="t" style="top:268.34px;font-size:18.5px;color:#9c9c9c;letter-spacing:0.244px;left:1430.5px;transform:translateX(-50%);margin-left:0.12px;-webkit-text-stroke:0.45px #fff;">Drop field here</span>
<span class="t" style="top:768.34px;font-size:18.5px;color:#9c9c9c;letter-spacing:-0.177px;left:599px;transform:translateX(-50%);margin-left:-0.09px;-webkit-text-stroke:0.45px #fff;">Drop</span>
<span class="t" style="top:793.34px;font-size:18.5px;color:#9c9c9c;letter-spacing:0.609px;left:598.8px;transform:translateX(-50%);margin-left:0.30px;-webkit-text-stroke:0.45px #fff;">field</span>
<span class="t" style="top:817.34px;font-size:18.5px;color:#9c9c9c;letter-spacing:-0.008px;left:599px;transform:translateX(-50%);margin-left:-0.00px;-webkit-text-stroke:0.45px #fff;">here</span>
<span class="t" style="top:1339.51px;font-size:19px;color:#6a6a6a;letter-spacing:-0.330px;left:27.9px;">Data Source</span>
<span class="t" style="top:1339.11px;font-size:19px;color:#505050;font-weight:700;letter-spacing:-0.299px;left:205.3px;-webkit-text-stroke:0.35px #fafafa;">Sheet 1</span>
<span class="t" style="top:370.21px;font-size:17px;color:#444;letter-spacing:-0.010px;left:367px;">Automatic</span>
<span class="t" style="top:446.10px;font-size:15px;color:#333;letter-spacing:-0.572px;left:365.5px;transform:translateX(-50%);margin-left:-0.29px;">Color</span>
<span class="t" style="top:446.10px;font-size:15px;color:#333;letter-spacing:-0.547px;left:439.0px;transform:translateX(-50%);margin-left:-0.27px;">Size</span>
<span class="t" style="top:446.10px;font-size:15px;color:#333;letter-spacing:0.246px;left:512.5px;transform:translateX(-50%);margin-left:0.12px;">Text</span>
<span class="t" style="top:518.10px;font-size:15px;color:#333;letter-spacing:-0.227px;left:364.5px;transform:translateX(-50%);margin-left:-0.11px;">Detail</span>
<span class="t" style="top:518.10px;font-size:15px;color:#333;letter-spacing:0.163px;left:439.0px;transform:translateX(-50%);margin-left:0.08px;">Tooltip</span>
<span class="t" style="top:53.82px;font-size:21px;color:#333;letter-spacing:-0.092px;left:1053.5px;">Standard</span>
<span class="t" style="top:53.12px;font-size:21px;color:#1a1a1a;letter-spacing:-0.507px;left:2136.9px;-webkit-text-stroke:0.3px #f5f5f5;">Show Me</span>
<span class="t" style="top:515.24px;font-size:20.5px;color:#333;letter-spacing:-0.051px;left:751.5px;">JobDate</span>
<span class="t" style="top:569.68px;font-size:20px;color:#333;font-family:'Liberation Mono', monospace;left:743.2px;transform:scaleY(0.91);transform-origin:0 15.32px;-webkit-text-stroke:0.4px #fff;"><span style="color:#3b80a4;">DATE</span><span style="color:#000;font-weight:700;">(</span><span style="color:#3b80a4;">STR</span><span style="color:#000;">(</span><span style="color:#3b80a4;">MID</span><span style="color:#000;">(</span><span style="color:#f4852f;">[DataServiceGenerateTime]</span><span style="color:#000;">, 1, 4)) + &quot;-&quot; +</span></span>
<span class="t" style="top:594.68px;font-size:20px;color:#333;font-family:'Liberation Mono', monospace;left:743.2px;transform:scaleY(0.91);transform-origin:0 15.32px;-webkit-text-stroke:0.4px #fff;"><span style="color:#3b80a4;">STR</span><span style="color:#000;">(</span><span style="color:#3b80a4;">MID</span><span style="color:#000;">(</span><span style="color:#f4852f;">[DataServiceGenerateTime]</span><span style="color:#000;">, 5, 2)) + &quot;-&quot; +</span></span>
<span class="t" style="top:619.68px;font-size:20px;color:#333;font-family:'Liberation Mono', monospace;left:743.2px;transform:scaleY(0.91);transform-origin:0 15.32px;-webkit-text-stroke:0.4px #fff;"><span style="color:#3b80a4;">STR</span><span style="color:#000;">(</span><span style="color:#3b80a4;">MID</span><span style="color:#000;">(</span><span style="color:#f4852f;">[DataServiceGenerateTime]</span><span style="color:#000;">, 7, 2))</span><span style="color:#000;font-weight:700;">)</span></span>
<span class="t" style="top:783.84px;font-size:20.5px;color:#2e2e2e;letter-spacing:-0.058px;left:741.5px;-webkit-text-stroke:0.3px #fff;">The calculation is valid.</span>
<span class="t" style="top:784.49px;font-size:19.5px;color:#666;letter-spacing:-0.556px;left:1320px;transform:translateX(-50%);margin-left:-0.28px;">Apply</span>
<span class="t" style="top:784.49px;font-size:19.5px;color:#fff;letter-spacing:-1.594px;left:1437px;transform:translateX(-50%);margin-left:-0.80px;">OK</span>
</body></html>
